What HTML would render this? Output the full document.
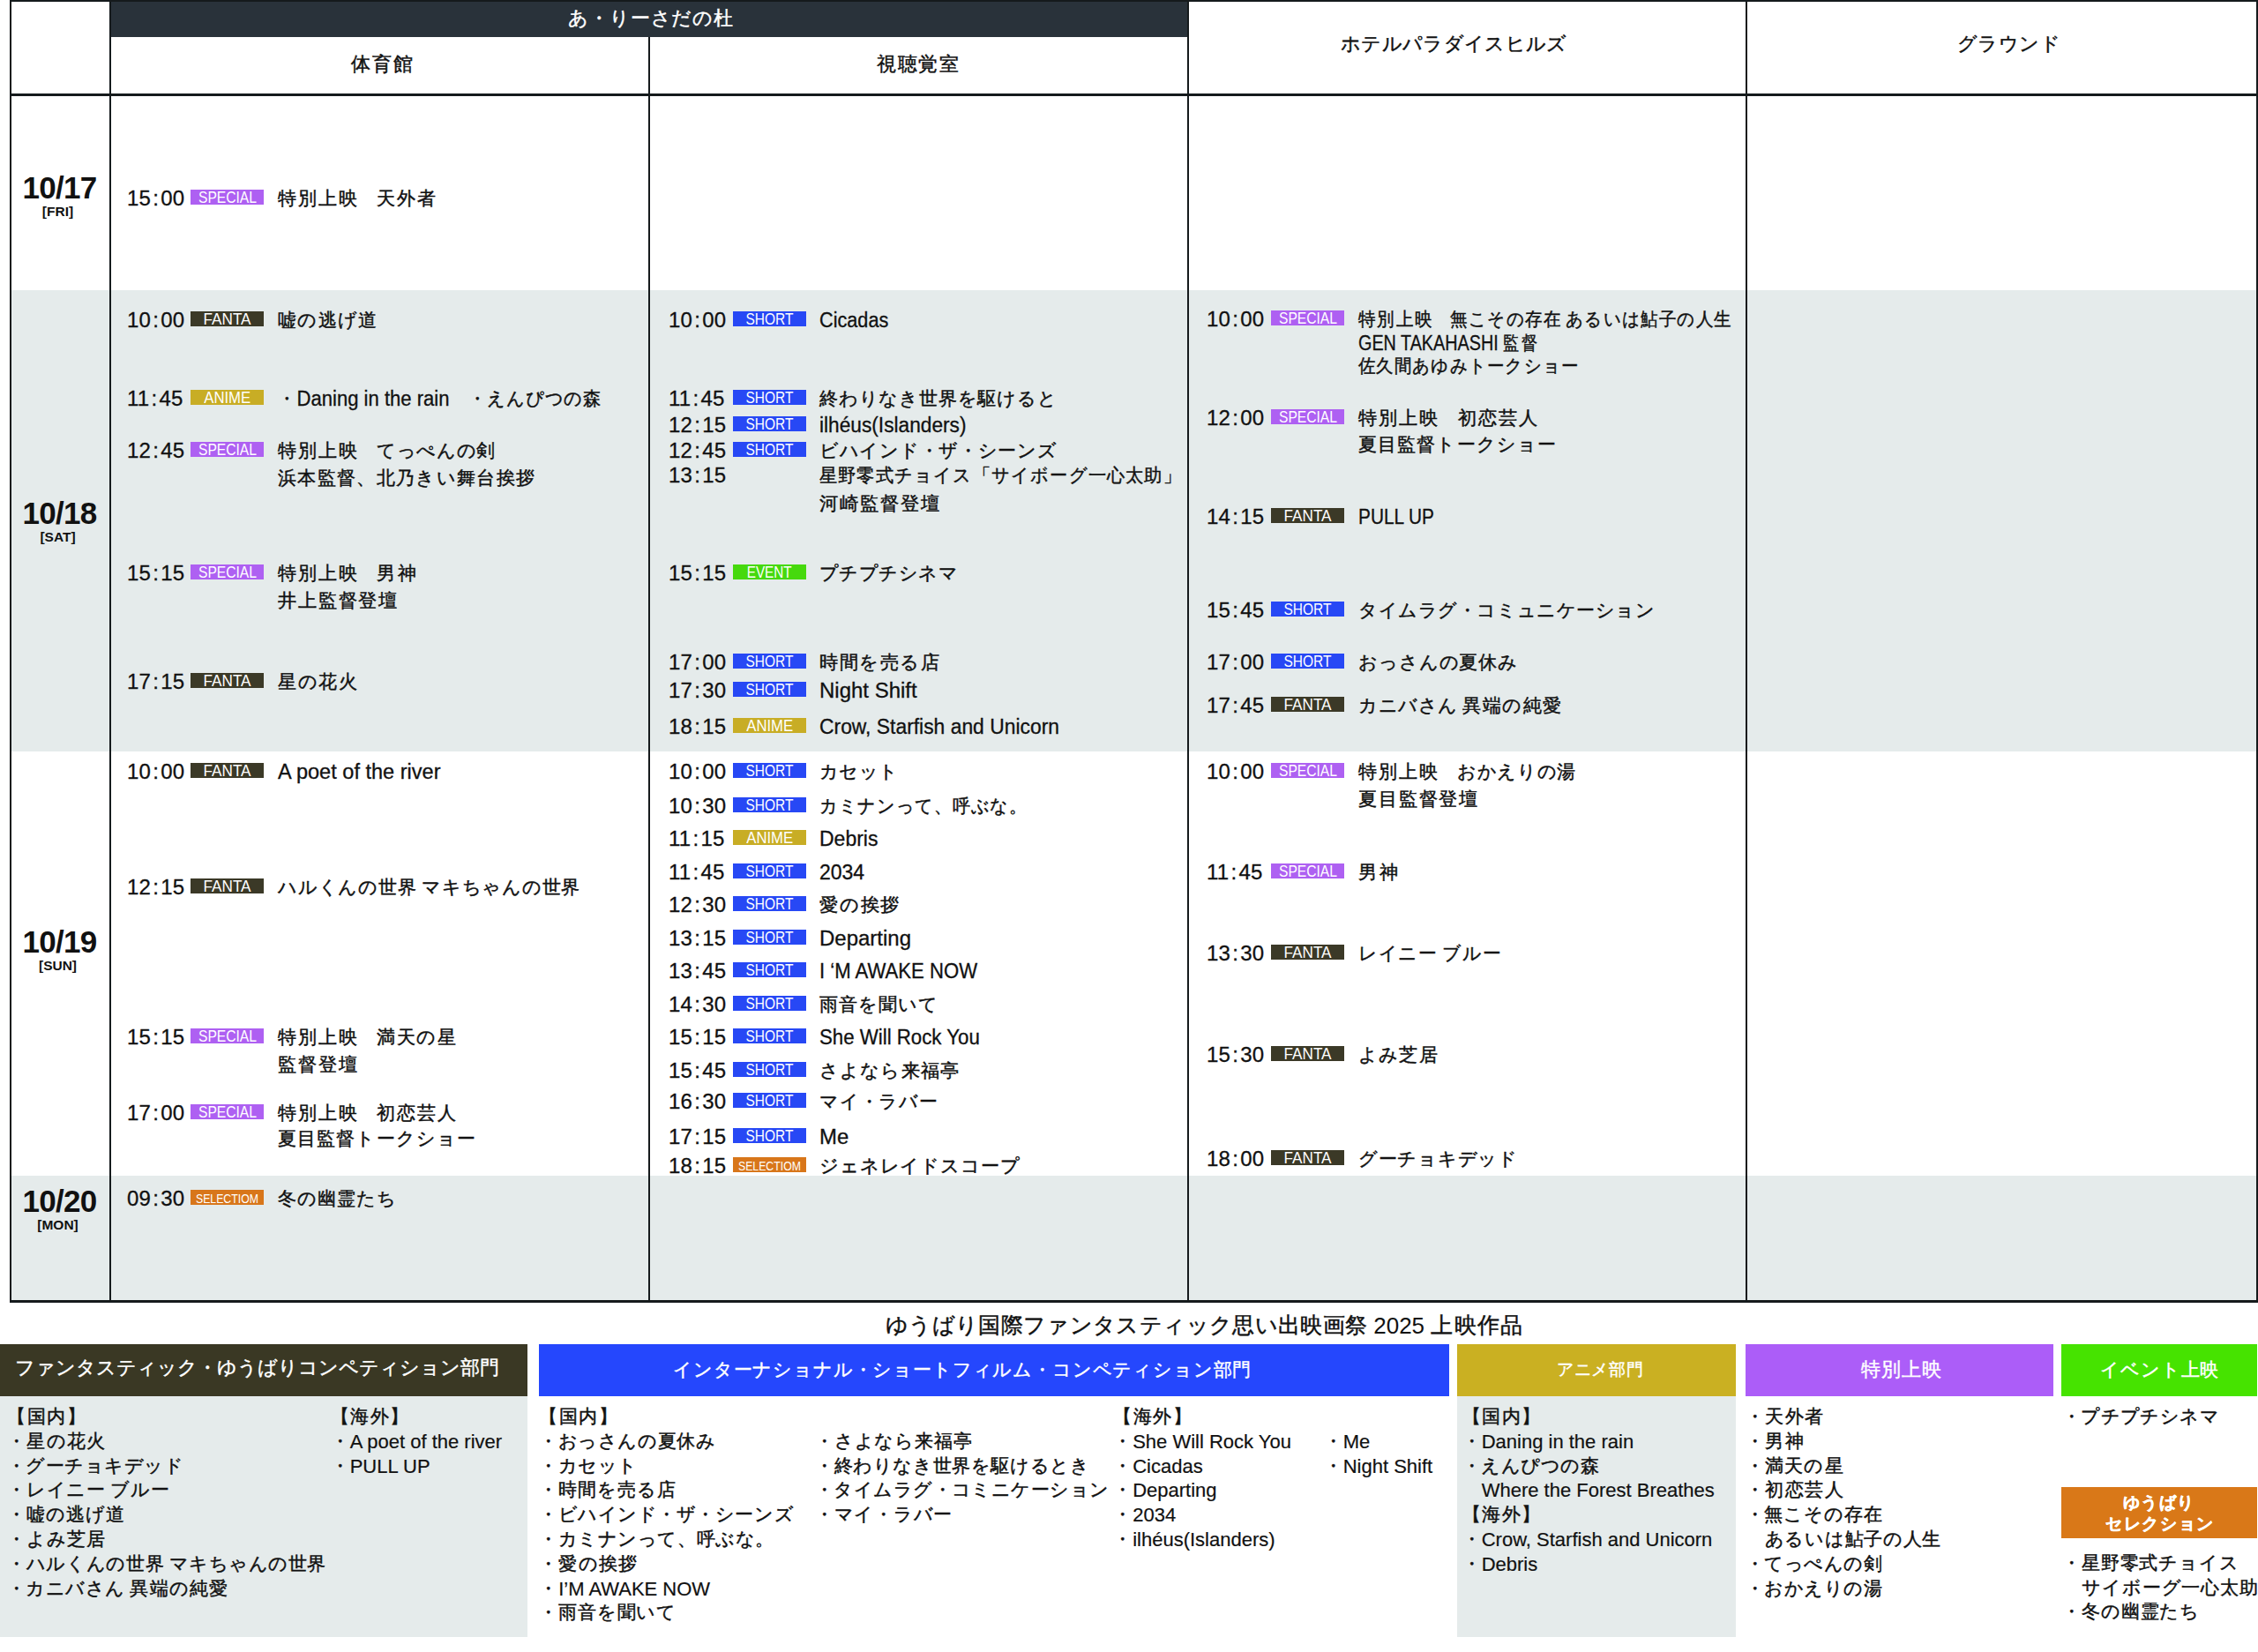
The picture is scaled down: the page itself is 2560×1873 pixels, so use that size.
<!DOCTYPE html><html lang="ja"><head><meta charset="utf-8"><title>schedule</title><style>
*{margin:0;padding:0;box-sizing:border-box}
html,body{width:2560px;height:1873px;overflow:hidden;background:#fff}
body{position:relative;font-family:"Liberation Sans",sans-serif;color:#111}
.a{position:absolute}
.ln{position:absolute;background:#151a1c}
.t{-webkit-text-stroke:0.3px currentColor;position:absolute;white-space:nowrap;line-height:30px;height:30px}
.c{-webkit-text-stroke:0.45px currentColor;display:inline-block;position:relative;top:-1px;font-weight:inherit;white-space:nowrap;text-align:justify;text-align-last:justify;vertical-align:baseline}
.s{display:inline-block;height:1px}
i{font-style:normal}
.tm{font-size:24px;letter-spacing:0.2px}
.co{margin:0 2px 0 2.2px}
.ti{font-size:23px}
.bd{position:absolute;width:83px;height:17px;color:#fff;font-size:15px;line-height:17px;text-align:center;white-space:nowrap}
.SPECIAL{background:#ae60f2}
.FANTA{background:#3b3927}
.ANIME{background:#c8ad25}
.SHORT{background:#2748f5}
.EVENT{background:#46d90d}
.SELECTIOM{background:#d8761a}
.hd{position:absolute;white-space:nowrap;font-size:24px;line-height:30px;height:30px}
.dt{position:absolute;width:113px;text-align:center;font-weight:bold;white-space:nowrap}
.dd{font-size:35px;line-height:36px;letter-spacing:-0.7px}
.dw{font-size:15.5px;line-height:16px}
.lg{-webkit-text-stroke:0.2px currentColor;position:absolute;white-space:nowrap;font-size:22px;line-height:27.6px}
.lb{position:absolute;color:#fff;white-space:nowrap;font-size:23px;line-height:30px}
</style></head><body>
<div class="a" style="left:11px;top:329px;width:2549px;height:523px;background:#e5ebeb"></div>
<div class="a" style="left:11px;top:1333px;width:2549px;height:142px;background:#e5ebeb"></div>
<div class="a" style="left:124px;top:0;width:1224px;height:42px;background:#29323a"></div>
<div class="ln" style="left:11px;top:0;width:2549px;height:2px"></div>
<div class="ln" style="left:11px;top:106px;width:2549px;height:2.6px"></div>
<div class="ln" style="left:11px;top:1474px;width:2549px;height:2.6px"></div>
<div class="ln" style="left:11.0px;top:0px;width:2.4px;height:1476px"></div>
<div class="ln" style="left:124.0px;top:0px;width:2.4px;height:1476px"></div>
<div class="ln" style="left:735.0px;top:42px;width:2.4px;height:1434px"></div>
<div class="ln" style="left:1346.0px;top:0px;width:2.4px;height:1476px"></div>
<div class="ln" style="left:1979.0px;top:0px;width:2.4px;height:1476px"></div>
<div class="ln" style="left:2558.0px;top:0px;width:2.4px;height:1476px"></div>
<div class="hd" style="left:644px;top:6px;color:#fff"><b class="c" style="width:187.2px;font-size:22.23px">あ・りーさだの杜</b></div>
<div class="hd" style="left:398px;top:58px"><b class="c" style="width:69.9px;font-size:22.13px">体育館</b></div>
<div class="hd" style="left:994px;top:58px"><b class="c" style="width:93.2px;font-size:22.13px">視聴覚室</b></div>
<div class="hd" style="left:1520px;top:35px"><b class="c" style="width:256.3px;font-size:22.13px">ホテルパラダイスヒルズ</b></div>
<div class="hd" style="left:2219px;top:35px"><b class="c" style="width:116.5px;font-size:22.13px">グラウンド</b></div>
<div class="dt dd" style="left:11px;top:195px">10/17</div>
<div class="dt dw" style="left:9px;top:231.5px">[FRI]</div>
<div class="dt dd" style="left:11px;top:564px">10/18</div>
<div class="dt dw" style="left:9px;top:600.5px">[SAT]</div>
<div class="dt dd" style="left:11px;top:1050px">10/19</div>
<div class="dt dw" style="left:9px;top:1086.5px">[SUN]</div>
<div class="dt dd" style="left:11px;top:1344px">10/20</div>
<div class="dt dw" style="left:9px;top:1380.5px">[MON]</div>
<div class="t tm" style="left:144px;top:209.5px">15<i class="co">:</i>00</div>
<div class="bd SPECIAL" style="left:216px;top:214.5px"><span style="display:inline-block;position:relative;top:1.2px;font-size:17.5px;transform:scaleX(0.893)">SPECIAL</span></div>
<div class="t ti" style="left:315px;top:209.5px;"><b class="c" style="width:89.6px;font-size:21.28px">特別上映</b><i class="s" style="width:22.4px"></i><b class="c" style="width:67.2px;font-size:21.28px">天外者</b></div>
<div class="t tm" style="left:144px;top:348.0px">10<i class="co">:</i>00</div>
<div class="bd FANTA" style="left:216px;top:353.0px"><span style="display:inline-block;position:relative;top:1.2px;font-size:17.5px;transform:scaleX(0.980)">FANTA</span></div>
<div class="t ti" style="left:315px;top:348.0px;"><b class="c" style="width:112.0px;font-size:21.28px">嘘の逃げ道</b></div>
<div class="t tm" style="left:144px;top:436.5px">11<i class="co">:</i>45</div>
<div class="bd ANIME" style="left:216px;top:441.5px"><span style="display:inline-block;position:relative;top:1.2px;font-size:17.5px;transform:scaleX(0.956)">ANIME</span></div>
<div class="t ti" style="left:315px;top:436.5px;transform:scaleX(0.9597);transform-origin:0 0;"><b class="c" style="width:22.4px;font-size:21.28px">・</b>Daning in the rain<i class="s" style="width:22.4px"></i><b class="c" style="width:156.8px;font-size:21.28px">・えんぴつの森</b></div>
<div class="t tm" style="left:144px;top:495.5px">12<i class="co">:</i>45</div>
<div class="bd SPECIAL" style="left:216px;top:500.5px"><span style="display:inline-block;position:relative;top:1.2px;font-size:17.5px;transform:scaleX(0.893)">SPECIAL</span></div>
<div class="t ti" style="left:315px;top:495.5px;"><b class="c" style="width:89.6px;font-size:21.28px">特別上映</b><i class="s" style="width:22.4px"></i><b class="c" style="width:134.4px;font-size:21.28px">てっぺんの剣</b></div>
<div class="t ti" style="left:315px;top:527.0px;"><b class="c" style="width:291.2px;font-size:21.28px">浜本監督、北乃きい舞台挨拶</b></div>
<div class="t tm" style="left:144px;top:634.5px">15<i class="co">:</i>15</div>
<div class="bd SPECIAL" style="left:216px;top:639.5px"><span style="display:inline-block;position:relative;top:1.2px;font-size:17.5px;transform:scaleX(0.893)">SPECIAL</span></div>
<div class="t ti" style="left:315px;top:634.5px;"><b class="c" style="width:89.6px;font-size:21.28px">特別上映</b><i class="s" style="width:22.4px"></i><b class="c" style="width:44.8px;font-size:21.28px">男神</b></div>
<div class="t ti" style="left:315px;top:665.5px;transform:scaleX(1.0083);transform-origin:0 0;"><b class="c" style="width:134.4px;font-size:21.28px">井上監督登壇</b></div>
<div class="t tm" style="left:144px;top:757.5px">17<i class="co">:</i>15</div>
<div class="bd FANTA" style="left:216px;top:762.5px"><span style="display:inline-block;position:relative;top:1.2px;font-size:17.5px;transform:scaleX(0.980)">FANTA</span></div>
<div class="t ti" style="left:315px;top:757.5px;"><b class="c" style="width:89.6px;font-size:21.28px">星の花火</b></div>
<div class="t tm" style="left:144px;top:859.5px">10<i class="co">:</i>00</div>
<div class="bd FANTA" style="left:216px;top:864.5px"><span style="display:inline-block;position:relative;top:1.2px;font-size:17.5px;transform:scaleX(0.980)">FANTA</span></div>
<div class="t ti" style="left:315px;top:859.5px;transform:scaleX(1.0234);transform-origin:0 0;">A poet of the river</div>
<div class="t tm" style="left:144px;top:990.5px">12<i class="co">:</i>15</div>
<div class="bd FANTA" style="left:216px;top:995.5px"><span style="display:inline-block;position:relative;top:1.2px;font-size:17.5px;transform:scaleX(0.980)">FANTA</span></div>
<div class="t ti" style="left:315px;top:990.5px;"><b class="c" style="width:156.8px;font-size:21.28px">ハルくんの世界</b> <b class="c" style="width:179.2px;font-size:21.28px">マキちゃんの世界</b></div>
<div class="t tm" style="left:144px;top:1160.5px">15<i class="co">:</i>15</div>
<div class="bd SPECIAL" style="left:216px;top:1165.5px"><span style="display:inline-block;position:relative;top:1.2px;font-size:17.5px;transform:scaleX(0.893)">SPECIAL</span></div>
<div class="t ti" style="left:315px;top:1160.5px;"><b class="c" style="width:89.6px;font-size:21.28px">特別上映</b><i class="s" style="width:22.4px"></i><b class="c" style="width:89.6px;font-size:21.28px">満天の星</b></div>
<div class="t ti" style="left:315px;top:1191.5px;transform:scaleX(1.0068);transform-origin:0 0;"><b class="c" style="width:89.6px;font-size:21.28px">監督登壇</b></div>
<div class="t tm" style="left:144px;top:1246.5px">17<i class="co">:</i>00</div>
<div class="bd SPECIAL" style="left:216px;top:1251.5px"><span style="display:inline-block;position:relative;top:1.2px;font-size:17.5px;transform:scaleX(0.893)">SPECIAL</span></div>
<div class="t ti" style="left:315px;top:1246.5px;"><b class="c" style="width:89.6px;font-size:21.28px">特別上映</b><i class="s" style="width:22.4px"></i><b class="c" style="width:89.6px;font-size:21.28px">初恋芸人</b></div>
<div class="t ti" style="left:315px;top:1276.0px;"><b class="c" style="width:224.0px;font-size:21.28px">夏目監督トークショー</b></div>
<div class="t tm" style="left:144px;top:1344.0px">09<i class="co">:</i>30</div>
<div class="bd SELECTIOM" style="left:216px;top:1349.0px"><span style="display:inline-block;position:relative;top:1.2px;font-size:14.0px;transform:scaleX(0.878)">SELECTIOM</span></div>
<div class="t ti" style="left:315px;top:1344.0px;"><b class="c" style="width:134.4px;font-size:21.28px">冬の幽霊たち</b></div>
<div class="t tm" style="left:758px;top:348.0px">10<i class="co">:</i>00</div>
<div class="bd SHORT" style="left:831px;top:353.0px"><span style="display:inline-block;position:relative;top:1.2px;font-size:17.5px;transform:scaleX(0.886)">SHORT</span></div>
<div class="t ti" style="left:929px;top:348.0px;transform:scaleX(0.9421);transform-origin:0 0;">Cicadas</div>
<div class="t tm" style="left:758px;top:436.5px">11<i class="co">:</i>45</div>
<div class="bd SHORT" style="left:831px;top:441.5px"><span style="display:inline-block;position:relative;top:1.2px;font-size:17.5px;transform:scaleX(0.886)">SHORT</span></div>
<div class="t ti" style="left:929px;top:436.5px;"><b class="c" style="width:268.8px;font-size:21.28px">終わりなき世界を駆けると</b></div>
<div class="t tm" style="left:758px;top:466.5px">12<i class="co">:</i>15</div>
<div class="bd SHORT" style="left:831px;top:471.5px"><span style="display:inline-block;position:relative;top:1.2px;font-size:17.5px;transform:scaleX(0.886)">SHORT</span></div>
<div class="t ti" style="left:929px;top:466.5px;transform:scaleX(0.9867);transform-origin:0 0;">ilhéus(Islanders)</div>
<div class="t tm" style="left:758px;top:496.2px">12<i class="co">:</i>45</div>
<div class="bd SHORT" style="left:831px;top:501.2px"><span style="display:inline-block;position:relative;top:1.2px;font-size:17.5px;transform:scaleX(0.886)">SHORT</span></div>
<div class="t ti" style="left:929px;top:496.2px;"><b class="c" style="width:268.8px;font-size:21.28px">ビハインド・ザ・シーンズ</b></div>
<div class="t tm" style="left:758px;top:524.4px">13<i class="co">:</i>15</div>
<div class="t ti" style="left:929px;top:524.4px;transform:scaleX(0.9629);transform-origin:0 0;"><b class="c" style="width:425.6px;font-size:21.28px">星野零式チョイス「サイボーグ一心太助」</b></div>
<div class="t ti" style="left:929px;top:555.5px;transform:scaleX(1.0150);transform-origin:0 0;"><b class="c" style="width:134.4px;font-size:21.28px">河崎監督登壇</b></div>
<div class="t tm" style="left:758px;top:634.5px">15<i class="co">:</i>15</div>
<div class="bd EVENT" style="left:831px;top:639.5px"><span style="display:inline-block;position:relative;top:1.2px;font-size:17.5px;transform:scaleX(0.874)">EVENT</span></div>
<div class="t ti" style="left:929px;top:634.5px;"><b class="c" style="width:156.8px;font-size:21.28px">プチプチシネマ</b></div>
<div class="t tm" style="left:758px;top:735.5px">17<i class="co">:</i>00</div>
<div class="bd SHORT" style="left:831px;top:740.5px"><span style="display:inline-block;position:relative;top:1.2px;font-size:17.5px;transform:scaleX(0.886)">SHORT</span></div>
<div class="t ti" style="left:929px;top:735.5px;transform:scaleX(1.0105);transform-origin:0 0;"><b class="c" style="width:134.4px;font-size:21.28px">時間を売る店</b></div>
<div class="t tm" style="left:758px;top:768.0px">17<i class="co">:</i>30</div>
<div class="bd SHORT" style="left:831px;top:773.0px"><span style="display:inline-block;position:relative;top:1.2px;font-size:17.5px;transform:scaleX(0.886)">SHORT</span></div>
<div class="t ti" style="left:929px;top:768.0px;transform:scaleX(1.0433);transform-origin:0 0;">Night Shift</div>
<div class="t tm" style="left:758px;top:809.0px">18<i class="co">:</i>15</div>
<div class="bd ANIME" style="left:831px;top:814.0px"><span style="display:inline-block;position:relative;top:1.2px;font-size:17.5px;transform:scaleX(0.956)">ANIME</span></div>
<div class="t ti" style="left:929px;top:809.0px;transform:scaleX(0.9942);transform-origin:0 0;">Crow, Starfish and Unicorn</div>
<div class="t tm" style="left:758px;top:859.9px">10<i class="co">:</i>00</div>
<div class="bd SHORT" style="left:831px;top:864.9px"><span style="display:inline-block;position:relative;top:1.2px;font-size:17.5px;transform:scaleX(0.886)">SHORT</span></div>
<div class="t ti" style="left:929px;top:859.9px;transform:scaleX(0.9945);transform-origin:0 0;"><b class="c" style="width:89.6px;font-size:21.28px">カセット</b></div>
<div class="t tm" style="left:758px;top:898.5px">10<i class="co">:</i>30</div>
<div class="bd SHORT" style="left:831px;top:903.5px"><span style="display:inline-block;position:relative;top:1.2px;font-size:17.5px;transform:scaleX(0.886)">SHORT</span></div>
<div class="t ti" style="left:929px;top:898.5px;transform:scaleX(0.9538);transform-origin:0 0;"><b class="c" style="width:246.4px;font-size:21.28px">カミナンって、呼ぶな。</b></div>
<div class="t tm" style="left:758px;top:936.1px">11<i class="co">:</i>15</div>
<div class="bd ANIME" style="left:831px;top:941.1px"><span style="display:inline-block;position:relative;top:1.2px;font-size:17.5px;transform:scaleX(0.956)">ANIME</span></div>
<div class="t ti" style="left:929px;top:936.1px;">Debris</div>
<div class="t tm" style="left:758px;top:973.9px">11<i class="co">:</i>45</div>
<div class="bd SHORT" style="left:831px;top:978.9px"><span style="display:inline-block;position:relative;top:1.2px;font-size:17.5px;transform:scaleX(0.886)">SHORT</span></div>
<div class="t ti" style="left:929px;top:973.9px;">2034</div>
<div class="t tm" style="left:758px;top:1011.2px">12<i class="co">:</i>30</div>
<div class="bd SHORT" style="left:831px;top:1016.2px"><span style="display:inline-block;position:relative;top:1.2px;font-size:17.5px;transform:scaleX(0.886)">SHORT</span></div>
<div class="t ti" style="left:929px;top:1011.2px;transform:scaleX(1.0101);transform-origin:0 0;"><b class="c" style="width:89.6px;font-size:21.28px">愛の挨拶</b></div>
<div class="t tm" style="left:758px;top:1048.5px">13<i class="co">:</i>15</div>
<div class="bd SHORT" style="left:831px;top:1053.5px"><span style="display:inline-block;position:relative;top:1.2px;font-size:17.5px;transform:scaleX(0.886)">SHORT</span></div>
<div class="t ti" style="left:929px;top:1048.5px;transform:scaleX(1.0428);transform-origin:0 0;">Departing</div>
<div class="t tm" style="left:758px;top:1086.0px">13<i class="co">:</i>45</div>
<div class="bd SHORT" style="left:831px;top:1091.0px"><span style="display:inline-block;position:relative;top:1.2px;font-size:17.5px;transform:scaleX(0.886)">SHORT</span></div>
<div class="t ti" style="left:929px;top:1086.0px;transform:scaleX(0.9622);transform-origin:0 0;">I ‘M AWAKE NOW</div>
<div class="t tm" style="left:758px;top:1123.9px">14<i class="co">:</i>30</div>
<div class="bd SHORT" style="left:831px;top:1128.9px"><span style="display:inline-block;position:relative;top:1.2px;font-size:17.5px;transform:scaleX(0.886)">SHORT</span></div>
<div class="t ti" style="left:929px;top:1123.9px;"><b class="c" style="width:134.4px;font-size:21.28px">雨音を聞いて</b></div>
<div class="t tm" style="left:758px;top:1161.2px">15<i class="co">:</i>15</div>
<div class="bd SHORT" style="left:831px;top:1166.2px"><span style="display:inline-block;position:relative;top:1.2px;font-size:17.5px;transform:scaleX(0.886)">SHORT</span></div>
<div class="t ti" style="left:929px;top:1161.2px;transform:scaleX(0.9673);transform-origin:0 0;">She Will Rock You</div>
<div class="t tm" style="left:758px;top:1198.8px">15<i class="co">:</i>45</div>
<div class="bd SHORT" style="left:831px;top:1203.8px"><span style="display:inline-block;position:relative;top:1.2px;font-size:17.5px;transform:scaleX(0.886)">SHORT</span></div>
<div class="t ti" style="left:929px;top:1198.8px;transform:scaleX(1.0077);transform-origin:0 0;"><b class="c" style="width:156.8px;font-size:21.28px">さよなら来福亭</b></div>
<div class="t tm" style="left:758px;top:1234.1px">16<i class="co">:</i>30</div>
<div class="bd SHORT" style="left:831px;top:1239.1px"><span style="display:inline-block;position:relative;top:1.2px;font-size:17.5px;transform:scaleX(0.886)">SHORT</span></div>
<div class="t ti" style="left:929px;top:1234.1px;transform:scaleX(0.9949);transform-origin:0 0;"><b class="c" style="width:134.4px;font-size:21.28px">マイ・ラバー</b></div>
<div class="t tm" style="left:758px;top:1273.9px">17<i class="co">:</i>15</div>
<div class="bd SHORT" style="left:831px;top:1278.9px"><span style="display:inline-block;position:relative;top:1.2px;font-size:17.5px;transform:scaleX(0.886)">SHORT</span></div>
<div class="t ti" style="left:929px;top:1273.9px;transform:scaleX(1.0390);transform-origin:0 0;">Me</div>
<div class="t tm" style="left:758px;top:1307.1px">18<i class="co">:</i>15</div>
<div class="bd SELECTIOM" style="left:831px;top:1312.1px"><span style="display:inline-block;position:relative;top:1.2px;font-size:14.0px;transform:scaleX(0.878)">SELECTIOM</span></div>
<div class="t ti" style="left:929px;top:1307.1px;transform:scaleX(1.0129);transform-origin:0 0;"><b class="c" style="width:224.0px;font-size:21.28px">ジェネレイドスコープ</b></div>
<div class="t tm" style="left:1368px;top:347.0px">10<i class="co">:</i>00</div>
<div class="bd SPECIAL" style="left:1441px;top:352.0px"><span style="display:inline-block;position:relative;top:1.2px;font-size:17.5px;transform:scaleX(0.893)">SPECIAL</span></div>
<div class="t ti" style="left:1540px;top:347.0px;transform:scaleX(0.9299);transform-origin:0 0;"><b class="c" style="width:89.6px;font-size:21.28px">特別上映</b><i class="s" style="width:22.4px"></i><b class="c" style="width:134.4px;font-size:21.28px">無こその存在</b> <b class="c" style="width:201.6px;font-size:21.28px">あるいは鮎子の人生</b></div>
<div class="t ti" style="left:1540px;top:373.8px;transform:scaleX(0.8605);transform-origin:0 0;">GEN TAKAHASHI <b class="c" style="width:44.8px;font-size:21.28px">監督</b></div>
<div class="t ti" style="left:1540px;top:400.4px;transform:scaleX(0.9290);transform-origin:0 0;"><b class="c" style="width:268.8px;font-size:21.28px">佐久間あゆみトークショー</b></div>
<div class="t tm" style="left:1368px;top:458.5px">12<i class="co">:</i>00</div>
<div class="bd SPECIAL" style="left:1441px;top:463.5px"><span style="display:inline-block;position:relative;top:1.2px;font-size:17.5px;transform:scaleX(0.893)">SPECIAL</span></div>
<div class="t ti" style="left:1540px;top:458.5px;transform:scaleX(1.0056);transform-origin:0 0;"><b class="c" style="width:89.6px;font-size:21.28px">特別上映</b><i class="s" style="width:22.4px"></i><b class="c" style="width:89.6px;font-size:21.28px">初恋芸人</b></div>
<div class="t ti" style="left:1540px;top:488.5px;"><b class="c" style="width:224.0px;font-size:21.28px">夏目監督トークショー</b></div>
<div class="t tm" style="left:1368px;top:571.2px">14<i class="co">:</i>15</div>
<div class="bd FANTA" style="left:1441px;top:576.2px"><span style="display:inline-block;position:relative;top:1.2px;font-size:17.5px;transform:scaleX(0.980)">FANTA</span></div>
<div class="t ti" style="left:1540px;top:571.2px;transform:scaleX(0.9050);transform-origin:0 0;">PULL UP</div>
<div class="t tm" style="left:1368px;top:676.5px">15<i class="co">:</i>45</div>
<div class="bd SHORT" style="left:1441px;top:681.5px"><span style="display:inline-block;position:relative;top:1.2px;font-size:17.5px;transform:scaleX(0.886)">SHORT</span></div>
<div class="t ti" style="left:1540px;top:676.5px;"><b class="c" style="width:336.0px;font-size:21.28px">タイムラグ・コミュニケーション</b></div>
<div class="t tm" style="left:1368px;top:736.0px">17<i class="co">:</i>00</div>
<div class="bd SHORT" style="left:1441px;top:741.0px"><span style="display:inline-block;position:relative;top:1.2px;font-size:17.5px;transform:scaleX(0.886)">SHORT</span></div>
<div class="t ti" style="left:1540px;top:736.0px;transform:scaleX(1.0062);transform-origin:0 0;"><b class="c" style="width:179.2px;font-size:21.28px">おっさんの夏休み</b></div>
<div class="t tm" style="left:1368px;top:785.2px">17<i class="co">:</i>45</div>
<div class="bd FANTA" style="left:1441px;top:790.2px"><span style="display:inline-block;position:relative;top:1.2px;font-size:17.5px;transform:scaleX(0.980)">FANTA</span></div>
<div class="t ti" style="left:1540px;top:785.2px;"><b class="c" style="width:112.0px;font-size:21.28px">カニバさん</b> <b class="c" style="width:112.0px;font-size:21.28px">異端の純愛</b></div>
<div class="t tm" style="left:1368px;top:860.0px">10<i class="co">:</i>00</div>
<div class="bd SPECIAL" style="left:1441px;top:865.0px"><span style="display:inline-block;position:relative;top:1.2px;font-size:17.5px;transform:scaleX(0.893)">SPECIAL</span></div>
<div class="t ti" style="left:1540px;top:860.0px;"><b class="c" style="width:89.6px;font-size:21.28px">特別上映</b><i class="s" style="width:22.4px"></i><b class="c" style="width:134.4px;font-size:21.28px">おかえりの湯</b></div>
<div class="t ti" style="left:1540px;top:891.0px;transform:scaleX(1.0083);transform-origin:0 0;"><b class="c" style="width:134.4px;font-size:21.28px">夏目監督登壇</b></div>
<div class="t tm" style="left:1368px;top:973.5px">11<i class="co">:</i>45</div>
<div class="bd SPECIAL" style="left:1441px;top:978.5px"><span style="display:inline-block;position:relative;top:1.2px;font-size:17.5px;transform:scaleX(0.893)">SPECIAL</span></div>
<div class="t ti" style="left:1540px;top:973.5px;transform:scaleX(1.0090);transform-origin:0 0;"><b class="c" style="width:44.8px;font-size:21.28px">男神</b></div>
<div class="t tm" style="left:1368px;top:1065.5px">13<i class="co">:</i>30</div>
<div class="bd FANTA" style="left:1441px;top:1070.5px"><span style="display:inline-block;position:relative;top:1.2px;font-size:17.5px;transform:scaleX(0.980)">FANTA</span></div>
<div class="t ti" style="left:1540px;top:1065.5px;transform:scaleX(0.9898);transform-origin:0 0;"><b class="c" style="width:89.6px;font-size:21.28px">レイニー</b> <b class="c" style="width:67.2px;font-size:21.28px">ブルー</b></div>
<div class="t tm" style="left:1368px;top:1181.1px">15<i class="co">:</i>30</div>
<div class="bd FANTA" style="left:1441px;top:1186.1px"><span style="display:inline-block;position:relative;top:1.2px;font-size:17.5px;transform:scaleX(0.980)">FANTA</span></div>
<div class="t ti" style="left:1540px;top:1181.1px;"><b class="c" style="width:89.6px;font-size:21.28px">よみ芝居</b></div>
<div class="t tm" style="left:1368px;top:1298.5px">18<i class="co">:</i>00</div>
<div class="bd FANTA" style="left:1441px;top:1303.5px"><span style="display:inline-block;position:relative;top:1.2px;font-size:17.5px;transform:scaleX(0.980)">FANTA</span></div>
<div class="t ti" style="left:1540px;top:1298.5px;transform:scaleX(1.0062);transform-origin:0 0;"><b class="c" style="width:179.2px;font-size:21.28px">グーチョキデッド</b></div>
<div class="a" style="left:1004px;top:1488px;white-space:nowrap;font-size:26px;line-height:30px"><b class="c" style="width:546.0px;font-size:24.70px">ゆうばり国際ファンタスティック思い出映画祭</b> 2025 <b class="c" style="width:104.0px;font-size:24.70px">上映作品</b></div>
<div class="a" style="left:0px;top:1524px;width:598px;height:59px;background:#3a3824"></div>
<div class="a" style="left:611px;top:1524px;width:1032px;height:59px;background:#2547fd"></div>
<div class="a" style="left:1652px;top:1524px;width:316px;height:59px;background:#cab022"></div>
<div class="a" style="left:1979px;top:1524px;width:349px;height:59px;background:#ac5df8"></div>
<div class="a" style="left:2337px;top:1524px;width:222px;height:59px;background:#46e300"></div>
<div class="a" style="left:0;top:1583px;width:598px;height:273px;background:#e5ebeb"></div>
<div class="a" style="left:1652px;top:1583px;width:316px;height:273px;background:#e5ebeb"></div>
<div class="a" style="left:2337px;top:1686px;width:222px;height:58px;background:#d97818"></div>
<div class="lb" style="left:17px;top:1536px"><b class="c" style="width:547.2px;font-size:21.66px">ファンタスティック・ゆうばりコンペティション部門</b></div>
<div class="lb" style="left:763px;top:1538px"><b class="c" style="width:655.4px;font-size:21.47px">インターナショナル・ショートフィルム・コンペティション部門</b></div>
<div class="lb" style="left:1765px;top:1538px;font-size:20px"><b class="c" style="width:97.5px;font-size:18.52px">アニメ部門</b></div>
<div class="lb" style="left:2110px;top:1538px"><b class="c" style="width:90.8px;font-size:21.56px">特別上映</b></div>
<div class="lb" style="left:2381px;top:1538px"><b class="c" style="width:134.4px;font-size:21.28px">イベント上映</b></div>
<div class="lb" style="left:2407px;top:1689px;font-size:21px;font-weight:bold"><b class="c" style="width:80.0px;font-size:19.00px">ゆうばり</b></div>
<div class="lb" style="left:2387px;top:1713px;font-size:21px;font-weight:bold"><b class="c" style="width:122.4px;font-size:19.38px">セレクション</b></div>
<div class="lg" style="left:8.0px;top:1593.0px"><b class="c" style="width:88.8px;font-size:21.09px">【国内】</b></div>
<div class="lg" style="left:8.0px;top:1620.8px"><b class="c" style="width:111.0px;font-size:21.09px">・星の花火</b></div>
<div class="lg" style="left:8.0px;top:1648.6px"><b class="c" style="width:199.8px;font-size:21.09px">・グーチョキデッド</b></div>
<div class="lg" style="left:8.0px;top:1676.4px"><b class="c" style="width:111.0px;font-size:21.09px">・レイニー</b> <b class="c" style="width:66.6px;font-size:21.09px">ブルー</b></div>
<div class="lg" style="left:8.0px;top:1704.2px"><b class="c" style="width:133.2px;font-size:21.09px">・嘘の逃げ道</b></div>
<div class="lg" style="left:8.0px;top:1732.0px"><b class="c" style="width:111.0px;font-size:21.09px">・よみ芝居</b></div>
<div class="lg" style="left:8.0px;top:1759.8px"><b class="c" style="width:177.6px;font-size:21.09px">・ハルくんの世界</b> <b class="c" style="width:177.6px;font-size:21.09px">マキちゃんの世界</b></div>
<div class="lg" style="left:8.0px;top:1787.6px"><b class="c" style="width:133.2px;font-size:21.09px">・カニバさん</b> <b class="c" style="width:111.0px;font-size:21.09px">異端の純愛</b></div>
<div class="lg" style="left:374.5px;top:1593.0px"><b class="c" style="width:88.8px;font-size:21.09px">【海外】</b></div>
<div class="lg" style="left:374.5px;top:1620.8px"><b class="c" style="width:22.2px;font-size:21.09px">・</b>A poet of the river</div>
<div class="lg" style="left:374.5px;top:1648.6px"><b class="c" style="width:22.2px;font-size:21.09px">・</b>PULL UP</div>
<div class="lg" style="left:611.0px;top:1593.0px"><b class="c" style="width:88.8px;font-size:21.09px">【国内】</b></div>
<div class="lg" style="left:611.0px;top:1620.8px"><b class="c" style="width:199.8px;font-size:21.09px">・おっさんの夏休み</b></div>
<div class="lg" style="left:611.0px;top:1648.6px"><b class="c" style="width:111.0px;font-size:21.09px">・カセット</b></div>
<div class="lg" style="left:611.0px;top:1676.4px"><b class="c" style="width:155.4px;font-size:21.09px">・時間を売る店</b></div>
<div class="lg" style="left:611.0px;top:1704.2px"><b class="c" style="width:288.6px;font-size:21.09px">・ビハインド・ザ・シーンズ</b></div>
<div class="lg" style="left:611.0px;top:1732.0px"><b class="c" style="width:266.4px;font-size:21.09px">・カミナンって、呼ぶな。</b></div>
<div class="lg" style="left:611.0px;top:1759.8px"><b class="c" style="width:111.0px;font-size:21.09px">・愛の挨拶</b></div>
<div class="lg" style="left:611.0px;top:1787.6px"><b class="c" style="width:22.2px;font-size:21.09px">・</b>I’M AWAKE NOW</div>
<div class="lg" style="left:611.0px;top:1815.4px"><b class="c" style="width:155.4px;font-size:21.09px">・雨音を聞いて</b></div>
<div class="lg" style="left:924.0px;top:1620.8px"><b class="c" style="width:177.6px;font-size:21.09px">・さよなら来福亭</b></div>
<div class="lg" style="left:924.0px;top:1648.6px"><b class="c" style="width:310.8px;font-size:21.09px">・終わりなき世界を駆けるとき</b></div>
<div class="lg" style="left:924.0px;top:1676.4px"><b class="c" style="width:333.0px;font-size:21.09px">・タイムラグ・コミニケーション</b></div>
<div class="lg" style="left:924.0px;top:1704.2px"><b class="c" style="width:155.4px;font-size:21.09px">・マイ・ラバー</b></div>
<div class="lg" style="left:1262.0px;top:1593.0px"><b class="c" style="width:88.8px;font-size:21.09px">【海外】</b></div>
<div class="lg" style="left:1262.0px;top:1620.8px"><b class="c" style="width:22.2px;font-size:21.09px">・</b>She Will Rock You</div>
<div class="lg" style="left:1262.0px;top:1648.6px"><b class="c" style="width:22.2px;font-size:21.09px">・</b>Cicadas</div>
<div class="lg" style="left:1262.0px;top:1676.4px"><b class="c" style="width:22.2px;font-size:21.09px">・</b>Departing</div>
<div class="lg" style="left:1262.0px;top:1704.2px"><b class="c" style="width:22.2px;font-size:21.09px">・</b>2034</div>
<div class="lg" style="left:1262.0px;top:1732.0px"><b class="c" style="width:22.2px;font-size:21.09px">・</b>ilhéus(Islanders)</div>
<div class="lg" style="left:1500.5px;top:1620.8px"><b class="c" style="width:22.2px;font-size:21.09px">・</b>Me</div>
<div class="lg" style="left:1500.5px;top:1648.6px"><b class="c" style="width:22.2px;font-size:21.09px">・</b>Night Shift</div>
<div class="lg" style="left:1657.5px;top:1593.0px"><b class="c" style="width:88.8px;font-size:21.09px">【国内】</b></div>
<div class="lg" style="left:1657.5px;top:1620.8px"><b class="c" style="width:22.2px;font-size:21.09px">・</b>Daning in the rain</div>
<div class="lg" style="left:1657.5px;top:1648.6px"><b class="c" style="width:155.4px;font-size:21.09px">・えんぴつの森</b></div>
<div class="lg" style="left:1657.5px;top:1676.4px"><i class="s" style="width:22.2px"></i>Where the Forest Breathes</div>
<div class="lg" style="left:1657.5px;top:1704.2px"><b class="c" style="width:88.8px;font-size:21.09px">【海外】</b></div>
<div class="lg" style="left:1657.5px;top:1732.0px"><b class="c" style="width:22.2px;font-size:21.09px">・</b>Crow, Starfish and Unicorn</div>
<div class="lg" style="left:1657.5px;top:1759.8px"><b class="c" style="width:22.2px;font-size:21.09px">・</b>Debris</div>
<div class="lg" style="left:1978.5px;top:1593.0px"><b class="c" style="width:88.8px;font-size:21.09px">・天外者</b></div>
<div class="lg" style="left:1978.5px;top:1620.8px"><b class="c" style="width:66.6px;font-size:21.09px">・男神</b></div>
<div class="lg" style="left:1978.5px;top:1648.6px"><b class="c" style="width:111.0px;font-size:21.09px">・満天の星</b></div>
<div class="lg" style="left:1978.5px;top:1676.4px"><b class="c" style="width:111.0px;font-size:21.09px">・初恋芸人</b></div>
<div class="lg" style="left:1978.5px;top:1704.2px"><b class="c" style="width:155.4px;font-size:21.09px">・無こその存在</b></div>
<div class="lg" style="left:1978.5px;top:1732.0px"><i class="s" style="width:22.2px"></i><b class="c" style="width:199.8px;font-size:21.09px">あるいは鮎子の人生</b></div>
<div class="lg" style="left:1978.5px;top:1759.8px"><b class="c" style="width:155.4px;font-size:21.09px">・てっぺんの剣</b></div>
<div class="lg" style="left:1978.5px;top:1787.6px"><b class="c" style="width:155.4px;font-size:21.09px">・おかえりの湯</b></div>
<div class="lg" style="left:2338.0px;top:1593.0px"><b class="c" style="width:177.6px;font-size:21.09px">・プチプチシネマ</b></div>
<div class="lg" style="left:2338.0px;top:1758.8px"><b class="c" style="width:199.8px;font-size:21.09px">・星野零式チョイス</b></div>
<div class="lg" style="left:2338.0px;top:1786.6px"><i class="s" style="width:22.2px"></i><b class="c" style="width:199.8px;font-size:21.09px">サイボーグ一心太助</b></div>
<div class="lg" style="left:2338.0px;top:1814.4px"><b class="c" style="width:155.4px;font-size:21.09px">・冬の幽霊たち</b></div>
</body></html>
